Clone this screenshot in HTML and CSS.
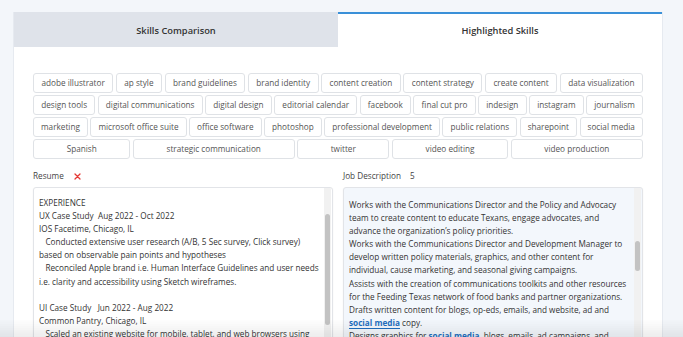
FILE: index.html
```html
<!DOCTYPE html>
<html>
<head>
    <title>Highlighted Skills</title>
    <meta charset="UTF-8">
    <meta name="viewport" content="width=device-width, initial-scale=1.0">
    <link rel="stylesheet" href="styles.css">
</head>
<body>
    <div class="panel">
        <div class="tabs">
            <div class="tab">Skills Comparison</div>
            <div class="tab active">Highlighted Skills</div>
        </div>

        <div class="content">
            <div class="chips">
                <span class="chip">adobe illustrator</span>
                <span class="chip">ap style</span>
                <span class="chip">brand guidelines</span>
                <span class="chip">brand identity</span>
                <span class="chip">content creation</span>
                <span class="chip">content strategy</span>
                <span class="chip">create content</span>
                <span class="chip">data visualization</span>
                <span class="chip">design tools</span>
                <span class="chip">digital communications</span>
                <span class="chip">digital design</span>
                <span class="chip">editorial calendar</span>
                <span class="chip">facebook</span>
                <span class="chip">final cut pro</span>
                <span class="chip">indesign</span>
                <span class="chip">instagram</span>
                <span class="chip">journalism</span>
                <span class="chip">marketing</span>
                <span class="chip">microsoft office suite</span>
                <span class="chip">office software</span>
                <span class="chip">photoshop</span>
                <span class="chip">professional development</span>
                <span class="chip">public relations</span>
                <span class="chip">sharepoint</span>
                <span class="chip">social media</span>
                <span class="chip">Spanish</span>
                <span class="chip">strategic communication</span>
                <span class="chip">twitter</span>
                <span class="chip">video editing</span>
                <span class="chip">video production</span>
            </div>

            <div class="docs">
                <div class="doc">
                    <div class="doc-label">Resume
                        <svg class="remove" width="7" height="7" viewBox="0 0 7 7">
                            <path d="M1 1 L6 6 M6 1 L1 6" stroke="#e53935" stroke-width="1.3" stroke-linecap="round"/>
                        </svg>
                    </div>
                    <div class="doc-box">
                        <div class="doc-text">EXPERIENCE
UX Case Study  Aug 2022 - Oct 2022
IOS Facetime, Chicago, IL
   Conducted extensive user research (A/B, 5 Sec survey, Click survey) based on observable pain points and hypotheses
   Reconciled Apple brand i.e. Human Interface Guidelines and user needs i.e. clarity and accessibility using Sketch wireframes.

UI Case Study   Jun 2022 - Aug 2022
Common Pantry, Chicago, IL
   Scaled an existing website for mobile, tablet, and web browsers using Figma prototypes and responsive grids.</div>
                        <div class="scrollbar"><div class="thumb resume-thumb"></div></div>
                    </div>
                </div>

                <div class="doc">
                    <div class="doc-label">Job Description <span class="count">5</span></div>
                    <div class="doc-box job">
                        <div class="doc-text">Works with the Communications Director and the Policy and Advocacy team to create content to educate Texans, engage advocates, and advance the organization’s policy priorities.
Works with the Communications Director and Development Manager to develop written policy materials, graphics, and other content for individual, cause marketing, and seasonal giving campaigns.
Assists with the creation of communications toolkits and other resources for the Feeding Texas network of food banks and partner organizations.
Drafts written content for blogs, op-eds, emails, and website, ad and <span class="hl">social media</span> copy.
Designs graphics for <span class="hl">social media</span>, blogs, emails, ad campaigns, and other communications.</div>
                        <div class="scrollbar"><div class="thumb job-thumb"></div></div>
                    </div>
                </div>
            </div>
        </div>
    </div>
    <div class="fade"></div>
</body>
</html>
```

FILE: styles.css
```css
* {
    box-sizing: border-box;
    margin: 0;
    padding: 0;
}

body {
    font-family: 'Open Sans', 'Noto Sans', sans-serif;
    background: #f3f6fa;
    color: #333;
    height: 337px;
    overflow: hidden;
    padding: 12px 20px 0 13px;
}

.panel {
    width: 650px;
    background: white;
    border: 1px solid #e6eaf0;
    border-top: none;
    min-height: 400px;
}

.tabs {
    display: flex;
}

.tab {
    flex: 1;
    height: 35px;
    display: flex;
    align-items: center;
    justify-content: center;
    font-size: 9.3px;
    font-weight: 600;
    color: #333;
    background: #dfe3ea;
    border-top: 2px solid #dfe3ea;
}

.tab.active {
    background: white;
    border-top-color: #3a90d8;
}

.content {
    padding: 26px 19px 0 19px;
}

.chips {
    display: flex;
    flex-wrap: wrap;
    gap: 2px 2.5px;
}

.chip {
    flex: 1 1 auto;
    text-align: center;
    font-size: 8.2px;
    line-height: 18px;
    height: 20px;
    padding: 0 5px;
    color: #555;
    border: 1px solid #dfe2e6;
    border-radius: 3px;
    white-space: nowrap;
}

.docs {
    display: grid;
    grid-template-columns: 300px 300px;
    gap: 10px;
    margin-top: 11px;
}

.doc-label {
    display: flex;
    align-items: center;
    font-size: 8.2px;
    color: #444;
    height: 12px;
    line-height: 12px;
    margin-bottom: 5px;
}

.remove {
    margin-left: 10px;
}

.count {
    margin-left: 9px;
}

.doc-box {
    position: relative;
    height: 190px;
    overflow: hidden;
    border: 1px solid #e2e4e8;
    border-radius: 3px;
    background: white;
    box-shadow: 0 1px 2px rgba(0,0,0,0.06);
    padding: 8px 10px 0 5px;
}

.doc-box.job {
    background: #f3f7fc;
    padding: 10px 15px 0 5px;
}

.doc-text {
    white-space: pre-wrap;
    font-size: 8.2px;
    line-height: 13.1px;
    color: #333;
}

.hl {
    color: #1f6fbf;
    font-weight: 700;
    border-bottom: 1px solid #1f6fbf;
}

.scrollbar {
    position: absolute;
    top: 0;
    right: 1px;
    width: 7px;
    height: 100%;
    background: #f1f1f1;
}

.thumb {
    position: absolute;
    left: 1px;
    width: 5px;
    border-radius: 3px;
    background: #c3c3c3;
}

.resume-thumb {
    top: 26px;
    height: 111px;
}

.job-thumb {
    top: 53px;
    height: 30px;
}

.fade {
    position: fixed;
    left: 0;
    right: 0;
    bottom: 0;
    height: 18px;
    background: linear-gradient(to bottom, rgba(0,0,0,0), rgba(0,0,0,0.07));
}
```
